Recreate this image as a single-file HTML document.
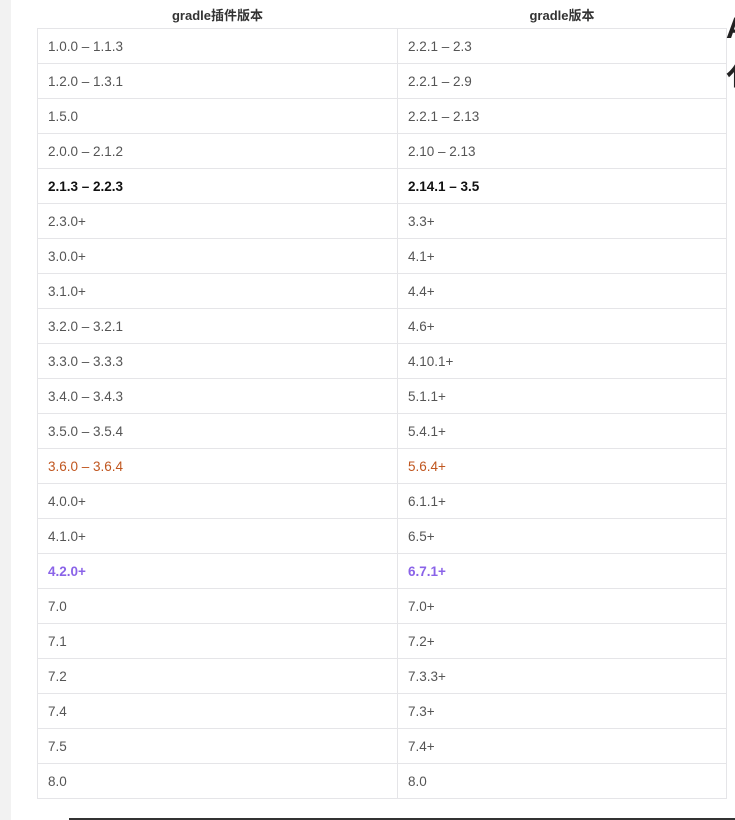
<!DOCTYPE html>
<html><head><meta charset="utf-8"><style>
html,body{margin:0;padding:0;width:735px;height:820px;overflow:hidden;background:#fff;position:relative;font-family:"Liberation Sans","Noto Sans CJK SC",sans-serif}
.strip{position:absolute;left:0;top:0;width:11px;height:820px;background:#f2f2f2}
table{position:absolute;left:37px;top:0;width:690px;border-collapse:collapse;font-size:13.5px;color:#555}
th{height:28px;font-weight:bold;color:#333;font-size:13px;text-align:center;padding:0;border-bottom:1px solid #e5e5e8}
td{height:34px;padding:0 0 0 10px;border:1px solid #e5e5e8;vertical-align:middle}
td:first-child{width:349px}
.b td{color:#111;font-weight:bold}
.o td{color:#c0561f}
.p td{color:#8a63e8;font-weight:bold}
.big{position:absolute;left:726px;font-size:30px;color:#222;font-weight:bold}
.line{position:absolute;left:69px;top:818px;width:680px;height:2px;background:#333}
</style></head><body>
<div class="strip"></div>
<table>
<tr><th>gradle插件版本</th><th>gradle版本</th></tr>
<tr><td>1.0.0 – 1.1.3</td><td>2.2.1 – 2.3</td></tr>
<tr><td>1.2.0 – 1.3.1</td><td>2.2.1 – 2.9</td></tr>
<tr><td>1.5.0</td><td>2.2.1 – 2.13</td></tr>
<tr><td>2.0.0 – 2.1.2</td><td>2.10 – 2.13</td></tr>
<tr class="b"><td>2.1.3 – 2.2.3</td><td>2.14.1 – 3.5</td></tr>
<tr><td>2.3.0+</td><td>3.3+</td></tr>
<tr><td>3.0.0+</td><td>4.1+</td></tr>
<tr><td>3.1.0+</td><td>4.4+</td></tr>
<tr><td>3.2.0 – 3.2.1</td><td>4.6+</td></tr>
<tr><td>3.3.0 – 3.3.3</td><td>4.10.1+</td></tr>
<tr><td>3.4.0 – 3.4.3</td><td>5.1.1+</td></tr>
<tr><td>3.5.0 – 3.5.4</td><td>5.4.1+</td></tr>
<tr class="o"><td>3.6.0 – 3.6.4</td><td>5.6.4+</td></tr>
<tr><td>4.0.0+</td><td>6.1.1+</td></tr>
<tr><td>4.1.0+</td><td>6.5+</td></tr>
<tr class="p"><td>4.2.0+</td><td>6.7.1+</td></tr>
<tr><td>7.0</td><td>7.0+</td></tr>
<tr><td>7.1</td><td>7.2+</td></tr>
<tr><td>7.2</td><td>7.3.3+</td></tr>
<tr><td>7.4</td><td>7.3+</td></tr>
<tr><td>7.5</td><td>7.4+</td></tr>
<tr><td>8.0</td><td>8.0</td></tr>
</table>
<div class="big" style="top:12px">A</div>
<div class="big" style="top:50px">亻</div>
<div class="line"></div>
</body></html>
